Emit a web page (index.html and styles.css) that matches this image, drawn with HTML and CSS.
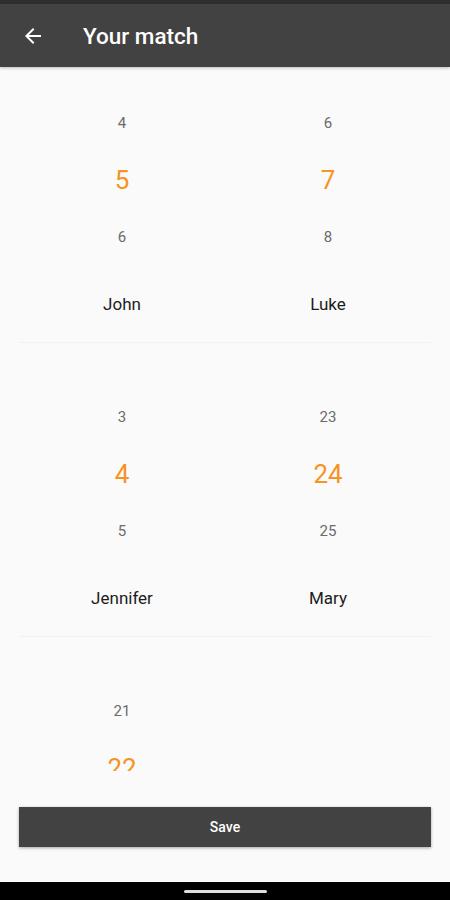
FILE: index.html
```html
<!DOCTYPE html>
<html lang="en">
<head>
    <meta charset="UTF-8">
    <meta name="viewport" content="width=device-width, initial-scale=1.0">
    <title>Your match</title>
    <link rel="stylesheet" href="styles.css">
</head>
<body>
    <div id="app">
        <div class="status"></div>
        <div class="toolbar">
            <svg class="back" width="24" height="24" viewBox="0 0 24 24">
                <path d="M20 11H7.830l5.59-5.59L12 4l-8 8 8 8 1.41-1.41L7.83 13H20v-2z" fill="#fff"/>
            </svg>
            <h1>Your match</h1>
        </div>

        <div class="list">
            <div class="item">
                <div class="cols">
                    <div class="col">
                        <div class="picker">
                            <span class="num">4</span>
                            <span class="num sel">5</span>
                            <span class="num">6</span>
                        </div>
                        <p class="name">John</p>
                    </div>
                    <div class="col">
                        <div class="picker">
                            <span class="num">6</span>
                            <span class="num sel">7</span>
                            <span class="num">8</span>
                        </div>
                        <p class="name">Luke</p>
                    </div>
                </div>
                <div class="divider"></div>
            </div>

            <div class="item">
                <div class="cols">
                    <div class="col">
                        <div class="picker">
                            <span class="num">3</span>
                            <span class="num sel">4</span>
                            <span class="num">5</span>
                        </div>
                        <p class="name">Jennifer</p>
                    </div>
                    <div class="col">
                        <div class="picker">
                            <span class="num">23</span>
                            <span class="num sel">24</span>
                            <span class="num">25</span>
                        </div>
                        <p class="name">Mary</p>
                    </div>
                </div>
                <div class="divider"></div>
            </div>

            <div class="item">
                <div class="cols">
                    <div class="col">
                        <div class="picker">
                            <span class="num">21</span>
                            <span class="num sel">22</span>
                            <span class="num">23</span>
                        </div>
                        <p class="name">Anna</p>
                    </div>
                    <div class="col"></div>
                </div>
            </div>
        </div>

        <div class="footer">
            <button class="save">Save</button>
        </div>
        <div class="navbar"><span class="handle"></span></div>
    </div>
</body>
</html>
```

FILE: styles.css
```css
* { margin: 0; padding: 0; box-sizing: border-box; }

body {
    width: 450px;
    height: 900px;
    overflow: hidden;
    background: #fafafa;
    font-family: Roboto, "Liberation Sans", sans-serif;
}

#app {
    height: 900px;
    display: flex;
    flex-direction: column;
}

.status {
    height: 4px;
    background: #2e2e2e;
}

.toolbar {
    height: 63px;
    background: #424242;
    display: flex;
    align-items: center;
    padding-left: 21px;
    box-shadow: 0 1px 3px rgba(0,0,0,0.25);
    position: relative;
    z-index: 1;
}

.toolbar h1 {
    color: #fff;
    font-size: 22.5px;
    font-weight: 500;
    margin-left: 38px;
}

.list {
    flex: 1;
    overflow: hidden;
    padding: 28px 19px 0;
}

.cols {
    display: flex;
}

.col {
    flex: 1;
    display: flex;
    flex-direction: column;
    align-items: center;
}

.picker {
    display: flex;
    flex-direction: column;
    align-items: center;
}

.num {
    height: 57px;
    line-height: 57px;
    font-size: 15px;
    color: #6b6b6b;
}

.num.sel {
    font-size: 26px;
    color: #f7931e;
}

.name {
    margin-top: 28px;
    line-height: 20px;
    font-size: 17px;
    color: #1c1c1c;
}

.divider {
    height: 1px;
    background: #f2f2f2;
    margin: 28px 0 46px;
}

.footer {
    height: 111px;
    padding: 36px 19px 0;
}

.save {
    appearance: none;
    border: 0;
    width: 100%;
    height: 40px;
    background: #424242;
    color: #fff;
    font-family: Roboto, "Liberation Sans", sans-serif;
    font-size: 14px;
    font-weight: 500;
    box-shadow: 0 1px 3px rgba(0,0,0,0.35);
}

.navbar {
    height: 18px;
    background: #000;
    display: flex;
    justify-content: center;
    align-items: center;
}

.handle {
    width: 83px;
    height: 3px;
    border-radius: 2px;
    background: #ddd;
}
```
